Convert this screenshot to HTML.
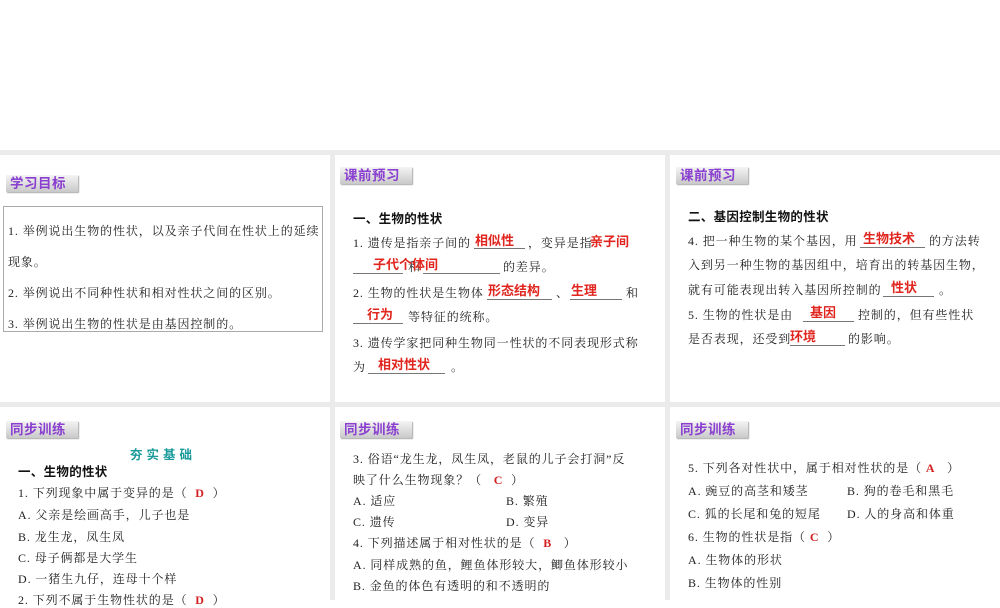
<!DOCTYPE html>
<html><head><meta charset="utf-8"><style>
body{margin:0;width:1000px;height:600px;position:relative;overflow:hidden;background:#fff;font-family:"Liberation Serif","Noto Serif CJK SC",serif;}
.g{position:absolute;background:#ebebeb}
.t{position:absolute;font-size:12px;line-height:16px;white-space:nowrap;color:#222;letter-spacing:0.9px}
.b{font-family:"Liberation Sans","Noto Sans CJK SC",sans-serif;font-weight:bold;font-size:12.5px;color:#111;letter-spacing:0.3px}
.r{position:absolute;font-family:"Liberation Sans","Noto Sans CJK SC",sans-serif;font-weight:bold;font-size:13px;line-height:16px;color:#e0261f;white-space:nowrap}
.u{position:absolute;height:0;border-bottom:1px solid #777}
.lab{position:absolute;width:72px;height:17px;background:linear-gradient(#f4f4f4,#c9c9c9);box-shadow:1px 1px 1px #aaa;font-family:"Liberation Sans","Noto Sans CJK SC",sans-serif;font-weight:bold;font-size:13.5px;line-height:17px;color:#8a3fd0;padding-left:4px;box-sizing:border-box;letter-spacing:0.5px}
.a{color:#d42020;font-family:"Liberation Serif","Noto Serif CJK SC",serif;font-weight:bold}
</style></head><body>
<div class="g" style="left:0;top:150px;width:1000px;height:5px"></div>
<div class="g" style="left:0;top:402px;width:1000px;height:5px"></div>
<div class="g" style="left:330px;top:150px;width:5px;height:450px"></div>
<div class="g" style="left:665px;top:150px;width:5px;height:450px"></div>

<!-- panel 1 -->
<div class="lab" style="left:6px;top:175px">学习目标</div>
<div style="position:absolute;left:3px;top:206px;width:320px;height:126px;border:1px solid #aaa;box-sizing:border-box"></div>
<div class="t" style="left:8px;top:223px">1. 举例说出生物的性状，以及亲子代间在性状上的延续</div>
<div class="t" style="left:8px;top:254px">现象。</div>
<div class="t" style="left:8px;top:285px">2. 举例说出不同种性状和相对性状之间的区别。</div>
<div class="t" style="left:8px;top:316px">3. 举例说出生物的性状是由基因控制的。</div>

<!-- panel 2 -->
<div class="lab" style="left:340px;top:167px">课前预习</div>
<div class="t b" style="left:353px;top:211px">一、生物的性状</div>
<div class="t" style="left:353px;top:235px">1. 遗传是指亲子间的</div>
<div class="u" style="left:474px;top:248px;width:51px"></div><div class="r" style="left:475px;top:233px">相似性</div>
<div class="t" style="left:528px;top:235px">，变异是指</div><div class="r" style="left:590px;top:234px">亲子间</div>
<div class="u" style="left:353px;top:273px;width:50px"></div><div class="t" style="left:408px;top:259px">和</div>
<div class="u" style="left:423px;top:273px;width:77px"></div><div class="r" style="left:373px;top:257px">子代个体间</div>
<div class="t" style="left:503px;top:259px">的差异。</div>
<div class="t" style="left:353px;top:285px">2. 生物的性状是生物体</div>
<div class="u" style="left:487px;top:299px;width:65px"></div><div class="r" style="left:488px;top:283px">形态结构</div>
<div class="t" style="left:556px;top:285px">、</div>
<div class="u" style="left:570px;top:299px;width:52px"></div><div class="r" style="left:571px;top:283px">生理</div>
<div class="t" style="left:626px;top:285px">和</div>
<div class="u" style="left:353px;top:323px;width:50px"></div><div class="r" style="left:367px;top:307px">行为</div>
<div class="t" style="left:408px;top:309px">等特征的统称。</div>
<div class="t" style="left:353px;top:335px">3. 遗传学家把同种生物同一性状的不同表现形式称</div>
<div class="t" style="left:353px;top:359px">为</div>
<div class="u" style="left:368px;top:373px;width:77px"></div><div class="r" style="left:378px;top:357px">相对性状</div>
<div class="t" style="left:451px;top:359px">。</div>

<!-- panel 3 -->
<div class="lab" style="left:676px;top:167px">课前预习</div>
<div class="t b" style="left:688px;top:209px">二、基因控制生物的性状</div>
<div class="t" style="left:688px;top:233px">4. 把一种生物的某个基因，用</div>
<div class="u" style="left:860px;top:247px;width:65px"></div><div class="r" style="left:863px;top:231px">生物技术</div>
<div class="t" style="left:929px;top:233px">的方法转</div>
<div class="t" style="left:688px;top:257px">入到另一种生物的基因组中，培育出的转基因生物，</div>
<div class="t" style="left:688px;top:282px">就有可能表现出转入基因所控制的</div>
<div class="u" style="left:883px;top:296px;width:51px"></div><div class="r" style="left:891px;top:280px">性状</div>
<div class="t" style="left:939px;top:282px">。</div>
<div class="t" style="left:688px;top:307px">5. 生物的性状是由</div>
<div class="u" style="left:803px;top:321px;width:51px"></div><div class="r" style="left:810px;top:305px">基因</div>
<div class="t" style="left:858px;top:307px">控制的，但有些性状</div>
<div class="t" style="left:688px;top:331px">是否表现，还受到</div>
<div class="u" style="left:790px;top:345px;width:55px"></div><div class="r" style="left:790px;top:329px">环境</div>
<div class="t" style="left:848px;top:331px">的影响。</div>

<!-- row2 panel1 -->
<div class="lab" style="left:6px;top:421px">同步训练</div>
<div class="t b" style="left:130px;top:447px;color:#1a9a9a;letter-spacing:4px">夯实基础</div>
<div class="t b" style="left:18px;top:464px">一、生物的性状</div>
<div class="t" style="left:18px;top:485px">1. 下列现象中属于变异的是（ <span class="a">&nbsp;D&nbsp;</span> ）</div>
<div class="t" style="left:18px;top:507px">A. 父亲是绘画高手，儿子也是</div>
<div class="t" style="left:18px;top:529px">B. 龙生龙，凤生凤</div>
<div class="t" style="left:18px;top:550px">C. 母子俩都是大学生</div>
<div class="t" style="left:18px;top:571px">D. 一猪生九仔，连母十个样</div>
<div class="t" style="left:18px;top:592px">2. 下列不属于生物性状的是（ <span class="a">&nbsp;D&nbsp;</span> ）</div>

<!-- row2 panel2 -->
<div class="lab" style="left:340px;top:421px">同步训练</div>
<div class="t" style="left:353px;top:451px">3. 俗语“龙生龙，凤生凤，老鼠的儿子会打洞”反</div>
<div class="t" style="left:353px;top:472px">映了什么生物现象？（ &nbsp;<span class="a">&nbsp;C&nbsp;</span> ）</div>
<div class="t" style="left:353px;top:493px">A. 适应</div><div class="t" style="left:506px;top:493px">B. 繁殖</div>
<div class="t" style="left:353px;top:514px">C. 遗传</div><div class="t" style="left:506px;top:514px">D. 变异</div>
<div class="t" style="left:353px;top:535px">4. 下列描述属于相对性状的是（ &nbsp;<span class="a">B</span> &nbsp;&nbsp;）</div>
<div class="t" style="left:353px;top:557px">A. 同样成熟的鱼，鲤鱼体形较大，鲫鱼体形较小</div>
<div class="t" style="left:353px;top:578px">B. 金鱼的体色有透明的和不透明的</div>

<!-- row2 panel3 -->
<div class="lab" style="left:676px;top:421px">同步训练</div>
<div class="t" style="left:688px;top:460px">5. 下列各对性状中，属于相对性状的是（ <span class="a">A</span> &nbsp;&nbsp;）</div>
<div class="t" style="left:688px;top:483px">A. 豌豆的高茎和矮茎</div><div class="t" style="left:847px;top:483px">B. 狗的卷毛和黑毛</div>
<div class="t" style="left:688px;top:506px">C. 狐的长尾和兔的短尾</div><div class="t" style="left:847px;top:506px">D. 人的身高和体重</div>
<div class="t" style="left:688px;top:529px">6. 生物的性状是指（ <span class="a">C</span> &nbsp;）</div>
<div class="t" style="left:688px;top:552px">A. 生物体的形状</div>
<div class="t" style="left:688px;top:575px">B. 生物体的性别</div>
</body></html>
